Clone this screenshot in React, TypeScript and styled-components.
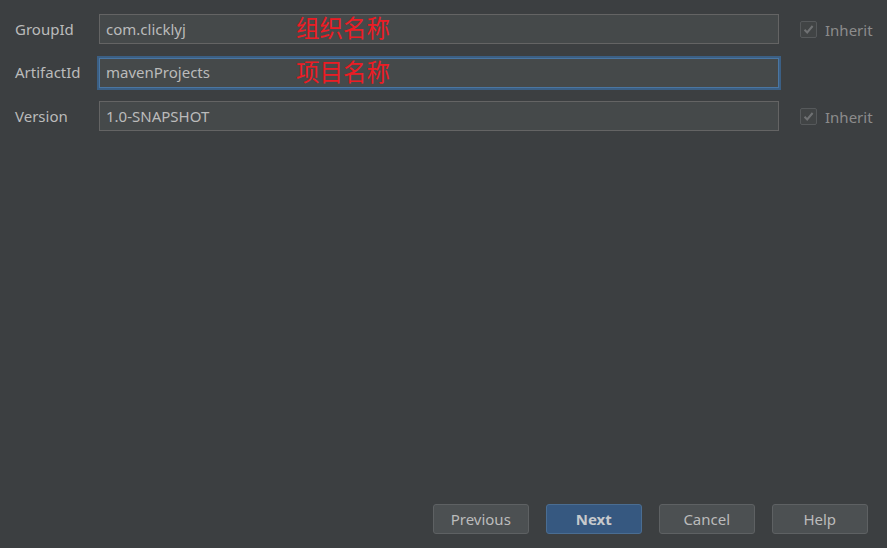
import styled, { createGlobalStyle } from "styled-components";

const GlobalStyle = createGlobalStyle`
  html, body {
    margin: 0;
    padding: 0;
    background: #3c3f41;
  }
  #root {
    height: 548px;
  }
`;

type Row = {
  label: string;
  value: string;
  note?: string;
  focused?: boolean;
  inherit?: boolean;
};

const rows: Row[] = [
  { label: "GroupId", value: "com.clicklyj", note: "组织名称", inherit: true },
  { label: "ArtifactId", value: "mavenProjects", note: "项目名称", focused: true },
  { label: "Version", value: "1.0-SNAPSHOT", inherit: true },
];

export default function App() {
  return (
    <>
      <GlobalStyle />
      <Dialog>
        <Form>
          {rows.map((row) => (
            <FormRow key={row.label}>
              <Label>{row.label}</Label>
              <Field $focused={row.focused}>
                <span>{row.value}</span>
                {row.note && <Note>{row.note}</Note>}
              </Field>
              {row.inherit ? (
                <Inherit>
                  <CheckBox>
                    <svg width="13" height="13" viewBox="0 0 13 13">
                      <path
                        d="M2.5 6.8 L5.2 9.5 L10.6 3"
                        fill="none"
                        stroke="#6f7173"
                        strokeWidth="2"
                      />
                    </svg>
                  </CheckBox>
                  <span>Inherit</span>
                </Inherit>
              ) : (
                <span />
              )}
            </FormRow>
          ))}
        </Form>
        <ButtonBar>
          <Button>Previous</Button>
          <Button $primary>Next</Button>
          <Button>Cancel</Button>
          <Button>Help</Button>
        </ButtonBar>
      </Dialog>
    </>
  );
}

const Dialog = styled.div`
  display: flex;
  flex-direction: column;
  justify-content: space-between;
  height: 100%;
  background: #3c3f41;
  font-family: "Noto Sans", "Open Sans", sans-serif;
  color: #bbbbbb;
  box-sizing: border-box;
`;

const Form = styled.div`
  display: grid;
  grid-template-columns: 84px 680px auto;
  row-gap: 13.5px;
  padding: 14px 0 0 15px;
`;

const FormRow = styled.div`
  display: contents;
`;

const Label = styled.div`
  display: flex;
  align-items: center;
  height: 29px;
  font-size: 15px;
  color: #bbbbbb;
`;

const Field = styled.div<{ $focused?: boolean }>`
  position: relative;
  display: flex;
  align-items: center;
  height: 30px;
  padding: 0 0 1px 6px;
  box-sizing: border-box;
  background: #45494a;
  border: 1px solid ${(p) => (p.$focused ? "#4a76a2" : "#646464")};
  box-shadow: ${(p) => (p.$focused ? "0 0 0 2px #3b5f84" : "none")};
  font-size: 15px;
  color: #bbbbbb;
`;

const Note = styled.span`
  position: absolute;
  left: 196px;
  top: 50%;
  transform: translateY(-55%);
  font-family: "Noto Sans CJK SC", sans-serif;
  font-size: 23.5px;
  color: #ec1c24;
  line-height: 1;
`;

const Inherit = styled.div`
  display: flex;
  align-items: center;
  gap: 8px;
  margin-left: 21px;
  height: 30px;
  font-size: 15px;
  color: #8c8c8c;
  padding-top: 1px;
  box-sizing: border-box;
`;

const CheckBox = styled.span`
  display: flex;
  align-items: center;
  justify-content: center;
  width: 17px;
  height: 17px;
  box-sizing: border-box;
  border: 1px solid #56595b;
  border-radius: 2px;
  background: #414445;
`;

const ButtonBar = styled.div`
  display: flex;
  justify-content: flex-end;
  gap: 16.5px;
  padding: 0 19px 14px 0;
`;

const Button = styled.button<{ $primary?: boolean }>`
  width: 96.5px;
  height: 30px;
  padding: 0;
  border-radius: 3px;
  border: 1px solid ${(p) => (p.$primary ? "#4a6d92" : "#5e6163")};
  background: ${(p) => (p.$primary ? "#365880" : "#4c5052")};
  color: ${(p) => (p.$primary ? "#c6c9cc" : "#bbbbbb")};
  font-family: "Noto Sans", "Open Sans", sans-serif;
  font-size: 15px;
  font-weight: ${(p) => (p.$primary ? 700 : 400)};
  cursor: pointer;
`;
